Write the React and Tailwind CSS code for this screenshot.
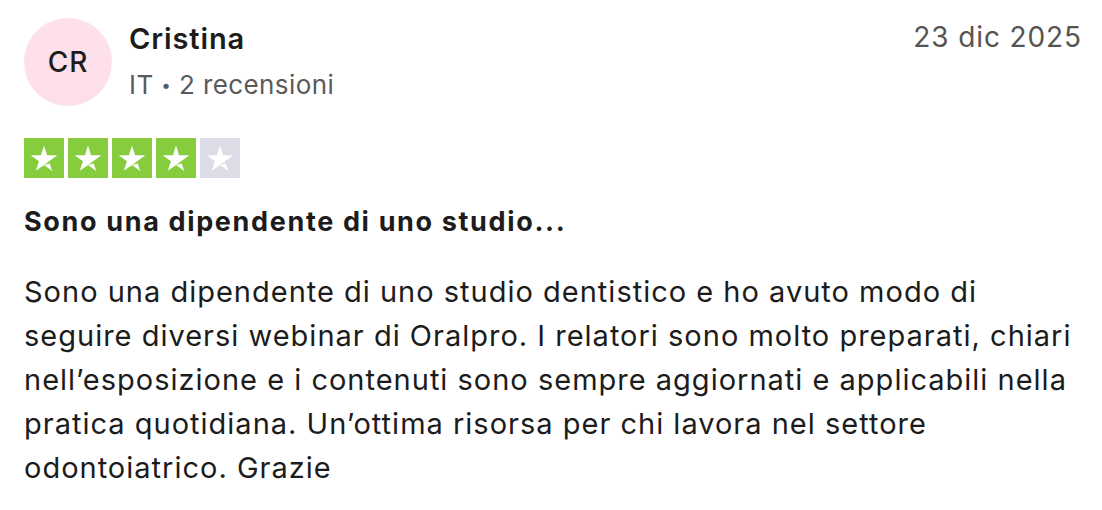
const STAR =
  "M48 64.7L61.9 61.2L67.7 79.1L48 64.7ZM80 41.5H55.5L48 18.4L40.5 41.5H16L35.8 55.8L28.3 78.8L48.1 64.5L60.3 55.8L80 41.5Z";

function Stars({ rating }) {
  return (
    <div className="flex gap-1">
      {[1, 2, 3, 4, 5].map((i) => (
        <div
          key={i}
          className={i <= rating ? "w-10 h-10 bg-[#86cd3e]" : "w-10 h-10 bg-[#dcdce6]"}
        >
          <svg viewBox="0 0 96 96" className="w-10 h-10">
            <path d={STAR} fill="#ffffff" />
          </svg>
        </div>
      ))}
    </div>
  );
}

export default function App() {
  return (
    <div className="w-[1102px] h-[510px] bg-white text-[#1c1c1c] font-['Inter',sans-serif] pl-6 pr-5 pt-[18px]">
      <div className="flex items-start">
        <div className="w-[88px] h-[88px] rounded-full bg-[#fde0ea] flex items-center justify-center text-[28px] leading-9 font-medium tracking-[0.9px]">
          CR
        </div>
        <div className="ml-[17px] flex-1">
          <div className="mt-[3px] text-[29px] leading-9 font-semibold tracking-[0.9px]">Cristina</div>
          <div className="mt-[10px] text-[26px] leading-9 text-[#5a5a5a] tracking-[0.4px]">
            IT <span className="text-[17px] align-[3px]">•</span> 2 recensioni
          </div>
        </div>
        <div className="mt-px text-[28px] leading-9 text-[#565451] tracking-[0.9px]">23 dic 2025</div>
      </div>

      <div className="mt-8">
        <Stars rating={4} />
      </div>

      <h2 className="mt-[26px] text-[27px] leading-9 font-bold tracking-[1.65px]">
        Sono una dipendente di uno studio...
      </h2>

      <p className="mt-[30px] text-[29px] leading-[44px] tracking-[1px]">
        Sono una dipendente di uno studio dentistico e ho avuto modo di seguire diversi webinar di
        Oralpro. I relatori sono molto preparati, chiari nell’esposizione e i contenuti sono sempre
        aggiornati e applicabili nella pratica quotidiana. Un’ottima risorsa per chi lavora nel
        settore odontoiatrico. Grazie
      </p>
    </div>
  );
}
